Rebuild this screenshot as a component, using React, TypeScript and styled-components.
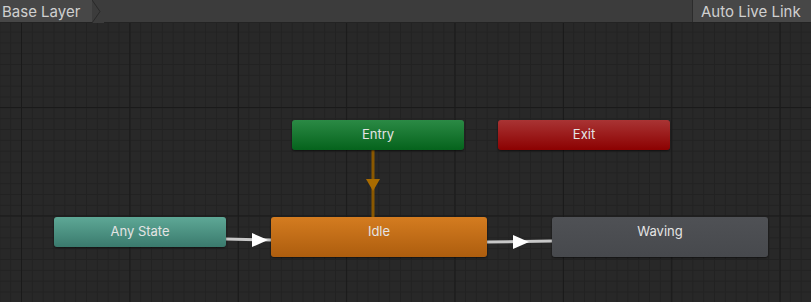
import React from "react";
import styled, { createGlobalStyle } from "styled-components";

type NodeKind = "entry" | "exit" | "any" | "default" | "state";

interface StateNode {
    id: string;
    label: string;
    kind: NodeKind;
    x: number;
    y: number;
    w: number;
    h: number;
}

const nodes: StateNode[] = [
    { id: "entry", label: "Entry", kind: "entry", x: 292, y: 97, w: 172, h: 30 },
    { id: "exit", label: "Exit", kind: "exit", x: 498, y: 97, w: 172, h: 30 },
    { id: "any", label: "Any State", kind: "any", x: 54, y: 194, w: 172, h: 30 },
    { id: "idle", label: "Idle", kind: "default", x: 271, y: 194, w: 216, h: 40 },
    { id: "waving", label: "Waving", kind: "state", x: 552, y: 194, w: 216, h: 40 },
];

const fills: Record<NodeKind, string> = {
    entry: "linear-gradient(#2b8a45, #05631c)",
    exit: "linear-gradient(#a93434, #8c0101)",
    any: "linear-gradient(#5ea896, #3a7a6d)",
    default: "linear-gradient(#d47c20, #ad5d0e)",
    state: "linear-gradient(#4f5155, #47494d)",
};

export default function App() {
    return (
        <>
            <GlobalStyle />
            <Window>
                {/* --- TOOLBAR --- */}
                <Toolbar>
                    <Crumb>
                        Base Layer
                        <Chevron width="12" height="23" viewBox="0 0 12 23">
                            <path d="M0 0 L8 11.5 L0 23 L12 23 L12 0 Z" fill="#3c3c3c" />
                            <path d="M0 0 L8 11.5 L0 23" fill="none" stroke="#2a2a2a" strokeWidth="1" />
                        </Chevron>
                    </Crumb>
                    <Spacer />
                    <LiveLink>Auto Live Link</LiveLink>
                </Toolbar>

                {/* --- GRAPH --- */}
                <Canvas>
                    <Edges width="811" height="279">
                        {/* entry -> idle */}
                        <line x1="373" y1="127" x2="373" y2="194" stroke="#8a5800" strokeWidth="3" />
                        <polygon points="366,156 380,156 373,168" fill="#a96b00" />
                        {/* any -> idle */}
                        <line x1="226" y1="216" x2="271" y2="217" stroke="#c8c8c8" strokeWidth="3" />
                        <polygon points="252,210 252,224 268,217" fill="#ffffff" />
                        {/* idle -> waving */}
                        <line x1="487" y1="219" x2="552" y2="218" stroke="#c8c8c8" strokeWidth="3" />
                        <polygon points="513,212 513,226 529,219" fill="#ffffff" />
                    </Edges>
                    {nodes.map(n => (
                        <Node
                            key={n.id}
                            kind={n.kind}
                            style={{ left: n.x, top: n.y, width: n.w, height: n.h }}
                        >
                            {n.label}
                        </Node>
                    ))}
                </Canvas>
            </Window>
        </>
    );
}

/* ---- Global ---- */
const GlobalStyle = createGlobalStyle`
    html, body {
        margin: 0;
        padding: 0;
        background: #282828;
        font-family: Inter, "Noto Sans", sans-serif;
    }
`;

const Window = styled.div`
    width: 811px;
    height: 302px;
    display: flex;
    flex-direction: column;
    overflow: hidden;
`;

/* ---- Toolbar ---- */
const Toolbar = styled.div`
    height: 23px;
    flex: none;
    display: flex;
    align-items: stretch;
    background: #3c3c3c;
    border-bottom: 1px solid #232323;
    box-sizing: border-box;
    color: #d0d0d0;
    font-size: 15px;
`;

const Crumb = styled.div`
    display: flex;
    align-items: center;
    padding-left: 2px;
    background: #474747;
    width: 90px;
    position: relative;
`;

const Chevron = styled.svg`
    position: absolute;
    right: -12px;
    top: 0;
    display: block;
`;

const Spacer = styled.div`
    flex: 1;
`;

const LiveLink = styled.div`
    display: flex;
    align-items: center;
    padding: 0 8px 0 8px;
    width: 119px;
    box-sizing: border-box;
    background: #474747;
    border-left: 1px solid #2c2c2c;
`;

/* ---- Canvas ---- */
const Canvas = styled.div`
    position: relative;
    flex: 1;
    background-color: #282828;
    background-image:
        linear-gradient(to right, #1a1a1a 1px, transparent 1px),
        linear-gradient(to bottom, #1a1a1a 1px, transparent 1px),
        linear-gradient(to right, #222222 1px, transparent 1px),
        linear-gradient(to bottom, #222222 1px, transparent 1px);
    background-size:
        108.4px 108.4px,
        108.4px 108.4px,
        10.84px 10.84px,
        10.84px 10.84px;
    background-position:
        21px 84px,
        21px 84px,
        10.2px 8.6px,
        10.2px 8.6px;
`;

const Edges = styled.svg`
    position: absolute;
    left: 0;
    top: 0;
    pointer-events: none;
`;

const Node = styled.div<{ kind: NodeKind }>`
    position: absolute;
    box-sizing: border-box;
    border-radius: 3px;
    background: ${({ kind }) => fills[kind]};
    box-shadow: 0 1px 2px rgba(0, 0, 0, 0.55);
    color: #e4e4e4;
    font-size: 13px;
    text-align: center;
    padding-top: 6px;
    line-height: 16px;
`;
